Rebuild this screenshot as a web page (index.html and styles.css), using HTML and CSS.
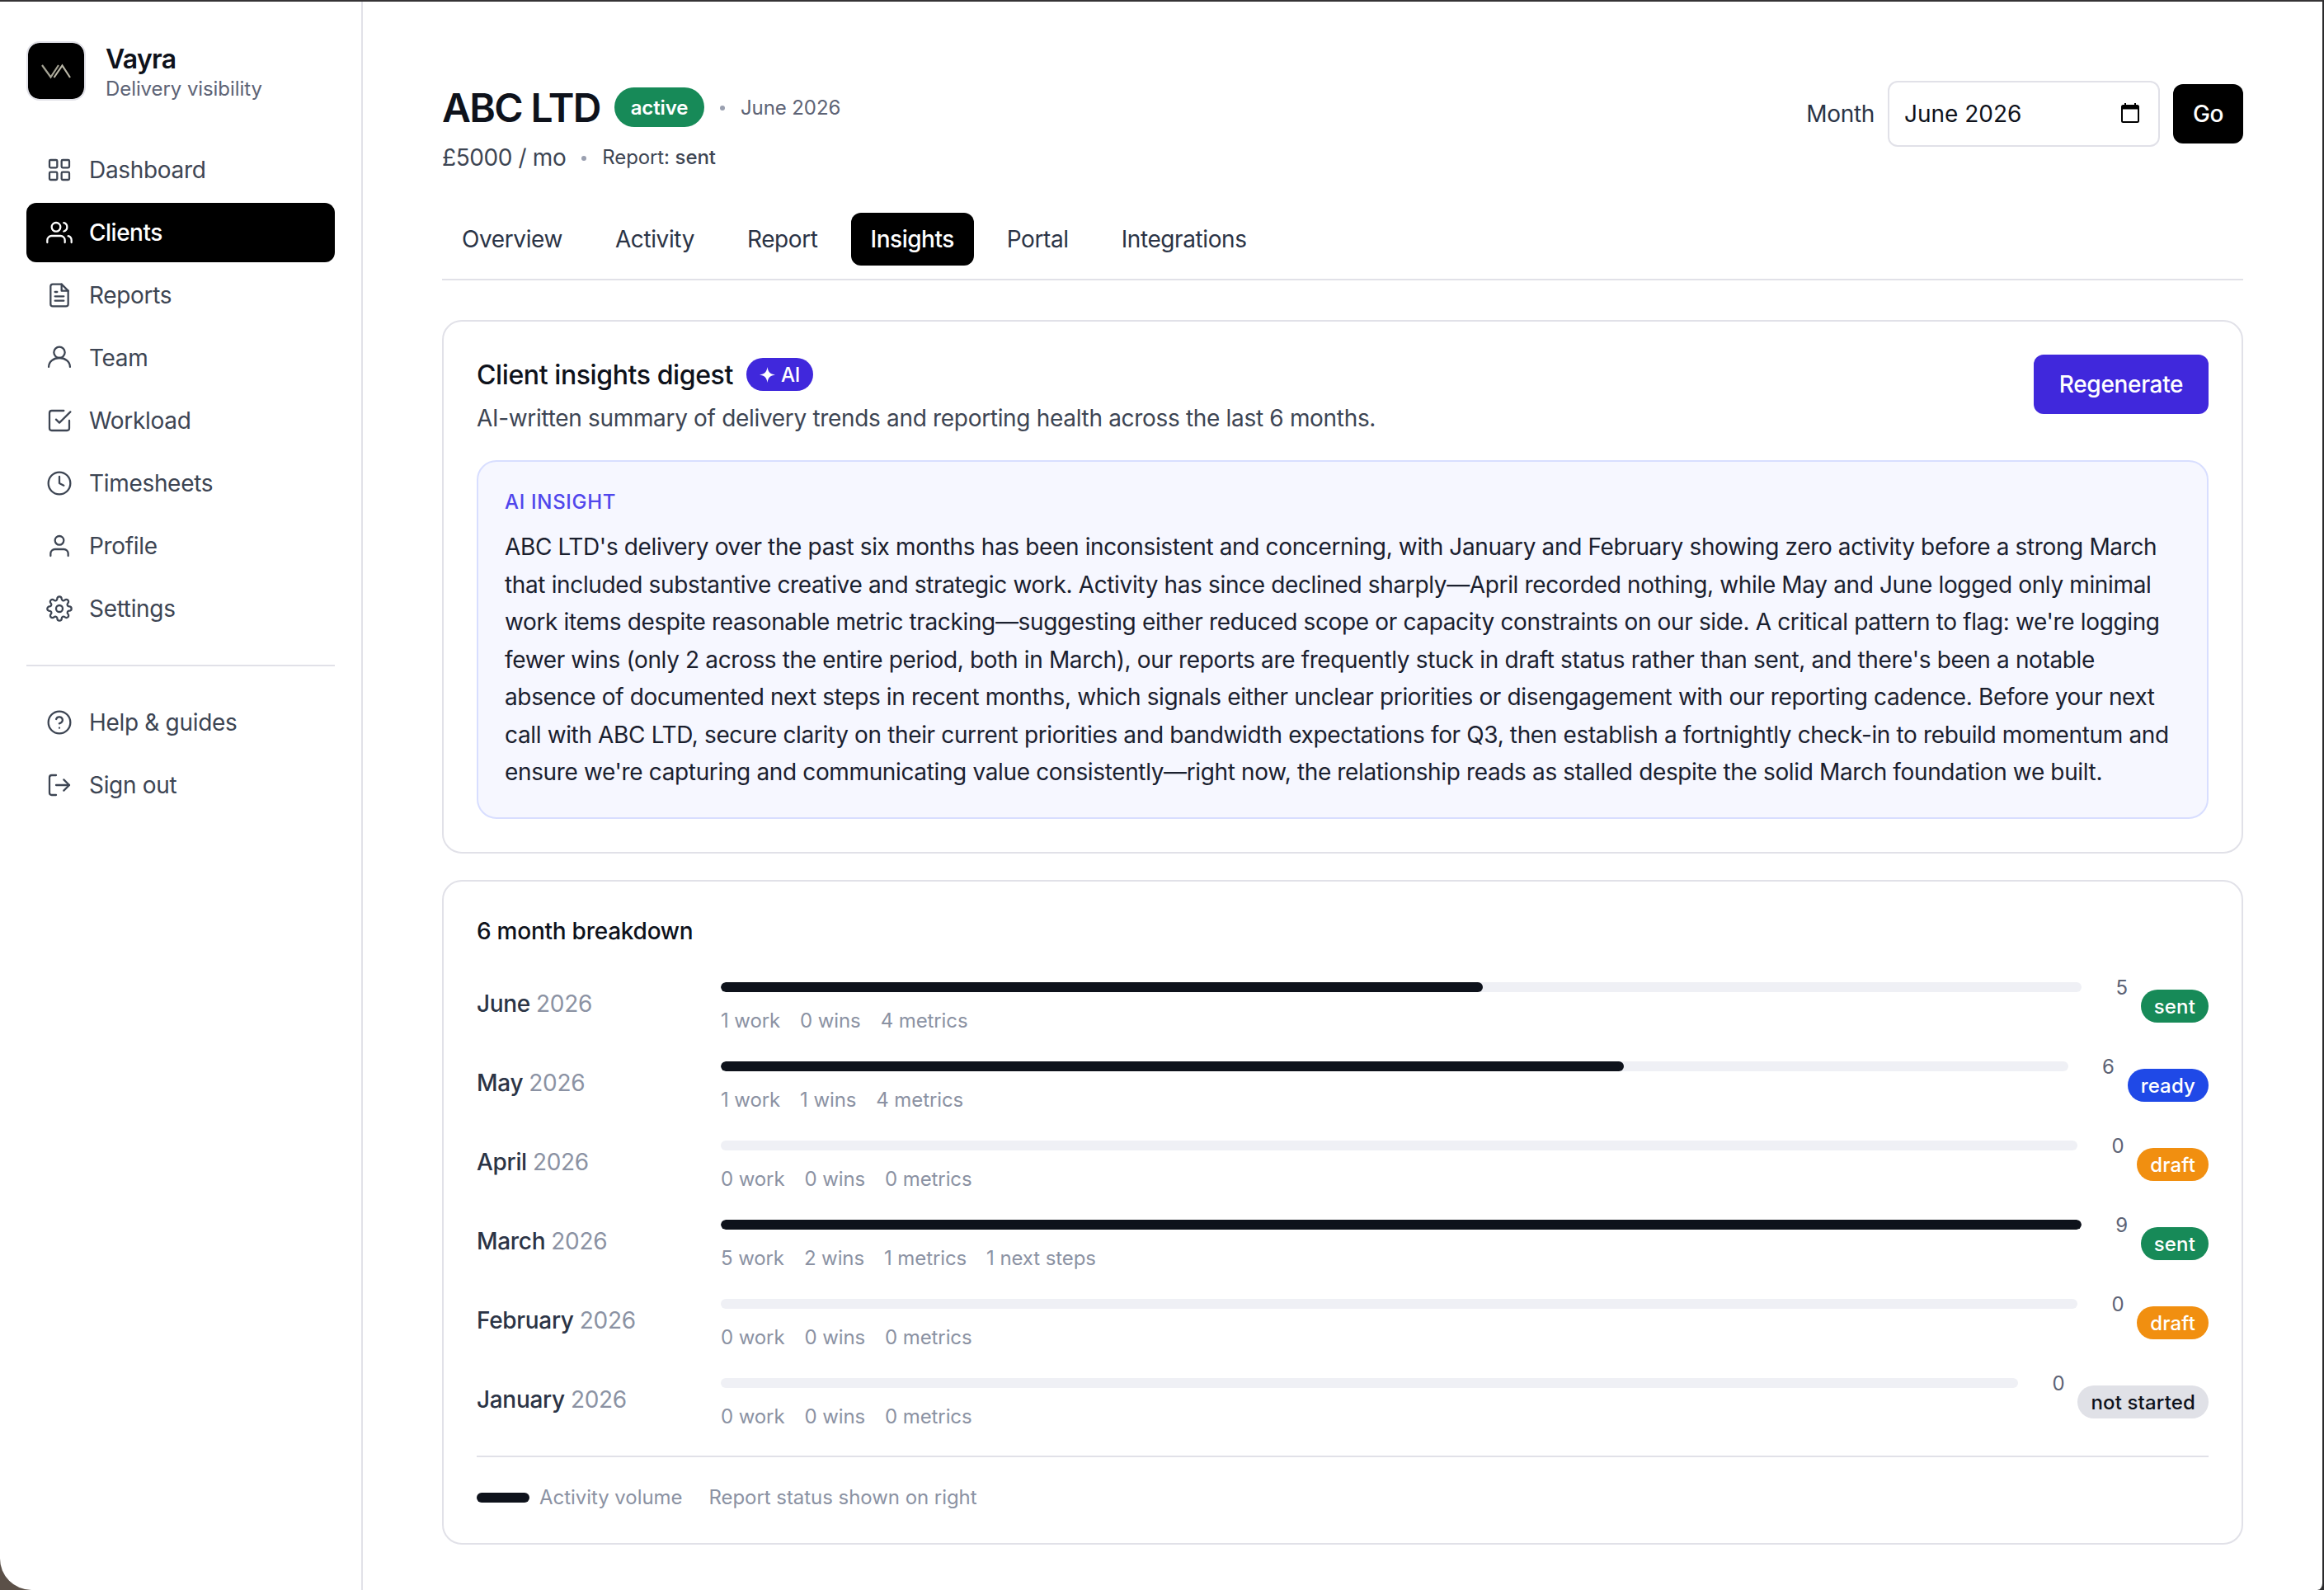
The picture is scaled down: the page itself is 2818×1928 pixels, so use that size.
FILE: index.html
```
<!DOCTYPE html>
<html lang="en">
<head>
    <meta charset="UTF-8">
    <meta name="viewport" content="width=device-width, initial-scale=1.0">
    <title>Vayra - Client insights</title>
    <link rel="stylesheet" href="styles.css">
</head>
<body>
    <div class="window">
        <aside class="sidebar">
            <div class="brand">
                <div class="brand-logo">
                    <svg viewBox="0 0 68 68" fill="none" stroke-width="2.2">
                        <path d="M17 27l10.500 14.500L37 27" stroke="#a5a394"/>
                        <path d="M31.500 42L41.500 27.500L51 42" stroke="#bab7a7"/>
                    </svg>
                </div>
                <div class="brand-text">
                    <div class="brand-name">Vayra</div>
                    <div class="brand-sub">Delivery visibility</div>
                </div>
            </div>

            <nav class="nav">
                <a class="nav-item">
                    <svg class="icon" viewBox="0 0 24 24"><rect x="3" y="3" width="7" height="7" rx="1"/><rect x="14" y="3" width="7" height="7" rx="1"/><rect x="14" y="14" width="7" height="7" rx="1"/><rect x="3" y="14" width="7" height="7" rx="1"/></svg>
                    <span>Dashboard</span>
                </a>
                <a class="nav-item active">
                    <svg class="icon" viewBox="0 0 24 24"><path d="M17 21v-2a4 4 0 0 0-4-4H5a4 4 0 0 0-4 4v2"/><circle cx="9" cy="7" r="4"/><path d="M23 21v-2a4 4 0 0 0-3-3.870"/><path d="M16 3.130a4 4 0 0 1 0 7.750"/></svg>
                    <span>Clients</span>
                </a>
                <a class="nav-item">
                    <svg class="icon" viewBox="0 0 24 24"><path d="M14 2H6a2 2 0 0 0-2 2v16a2 2 0 0 0 2 2h12a2 2 0 0 0 2-2V8z"/><path d="M14 2v6h6"/><path d="M16 13H8"/><path d="M16 17H8"/><path d="M10 9H8"/></svg>
                    <span>Reports</span>
                </a>
                <a class="nav-item">
                    <svg class="icon" viewBox="0 0 24 24"><circle cx="12" cy="7" r="5"/><path d="M2.300 20.200c0-4.700 4.300-8.200 9.700-8.200s9.700 3.500 9.700 8.200"/></svg>
                    <span>Team</span>
                </a>
                <a class="nav-item">
                    <svg class="icon" viewBox="0 0 24 24"><path d="M9 11l3 3L22 4"/><path d="M21 12v7a2 2 0 0 1-2 2H5a2 2 0 0 1-2-2V5a2 2 0 0 1 2-2h11"/></svg>
                    <span>Workload</span>
                </a>
                <a class="nav-item">
                    <svg class="icon" viewBox="0 0 24 24"><circle cx="12" cy="12" r="10"/><path d="M12 6v6l4 2"/></svg>
                    <span>Timesheets</span>
                </a>
                <a class="nav-item">
                    <svg class="icon" viewBox="0 0 24 24"><path d="M20 21v-2a4 4 0 0 0-4-4H8a4 4 0 0 0-4 4v2"/><circle cx="12" cy="7" r="4"/></svg>
                    <span>Profile</span>
                </a>
                <a class="nav-item">
                    <svg class="icon" viewBox="0 0 24 24"><circle cx="12" cy="12" r="3"/><path d="M19.400 15a1.650 1.650 0 0 0 .33 1.820l.06.06a2 2 0 0 1 0 2.830 2 2 0 0 1-2.830 0l-.06-.06a1.650 1.650 0 0 0-1.820-.33 1.650 1.650 0 0 0-1 1.510V21a2 2 0 0 1-2 2 2 2 0 0 1-2-2v-.09A1.650 1.650 0 0 0 9 19.400a1.650 1.650 0 0 0-1.820.33l-.06.06a2 2 0 0 1-2.830 0 2 2 0 0 1 0-2.830l.06-.06a1.650 1.650 0 0 0 .33-1.820 1.650 1.650 0 0 0-1.510-1H3a2 2 0 0 1-2-2 2 2 0 0 1 2-2h.09A1.650 1.650 0 0 0 4.600 9a1.650 1.650 0 0 0-.33-1.820l-.06-.06a2 2 0 0 1 0-2.830 2 2 0 0 1 2.830 0l.06.06a1.650 1.650 0 0 0 1.820.33H9a1.650 1.650 0 0 0 1-1.510V3a2 2 0 0 1 2-2 2 2 0 0 1 2 2v.09a1.650 1.650 0 0 0 1 1.510 1.650 1.650 0 0 0 1.820-.33l.06-.06a2 2 0 0 1 2.830 0 2 2 0 0 1 0 2.830l-.06.06a1.650 1.650 0 0 0-.33 1.820V9a1.650 1.650 0 0 0 1.510 1H21a2 2 0 0 1 2 2 2 2 0 0 1-2 2h-.09a1.650 1.650 0 0 0-1.510 1z"/></svg>
                    <span>Settings</span>
                </a>
            </nav>

            <nav class="nav nav-bottom">
                <a class="nav-item">
                    <svg class="icon" viewBox="0 0 24 24"><circle cx="12" cy="12" r="10"/><path d="M9.090 9a3 3 0 0 1 5.830 1c0 2-3 3-3 3"/><path d="M12 17h.01"/></svg>
                    <span>Help &amp; guides</span>
                </a>
                <a class="nav-item">
                    <svg class="icon" viewBox="0 0 24 24"><path d="M9 21H5a2 2 0 0 1-2-2V5a2 2 0 0 1 2-2h4"/><path d="M16 17l5-5-5-5"/><path d="M21 12H9"/></svg>
                    <span>Sign out</span>
                </a>
            </nav>
        </aside>

        <main class="main">
            <header class="page-header">
                <div>
                    <div class="title-row">
                        <h1>ABC LTD</h1>
                        <span class="badge-active">active</span>
                        <span class="dot"></span>
                        <span class="title-month">June 2026</span>
                    </div>
                    <div class="meta-row">
                        <span class="price">£5000 / mo</span>
                        <span class="dot"></span>
                        <span class="report">Report: <b>sent</b></span>
                    </div>
                </div>
                <form class="month-form">
                    <label>Month</label>
                    <div class="month-input">
                        <span>June 2026</span>
                        <svg viewBox="0 0 24 26"><path fill-rule="evenodd" d="M5 0h2v2h10V0h2v2h1.500A2.500 2.500 0 0 1 23 4.500v17a2.500 2.500 0 0 1-2.500 2.500h-17A2.500 2.500 0 0 1 1 21.500v-17A2.500 2.500 0 0 1 3.500 2H5zM3 7.500V22h18V7.500z"/></svg>
                    </div>
                    <button type="button" class="btn-go">Go</button>
                </form>
            </header>

            <div class="tabs">
                <a class="tab">Overview</a>
                <a class="tab">Activity</a>
                <a class="tab">Report</a>
                <a class="tab active">Insights</a>
                <a class="tab">Portal</a>
                <a class="tab">Integrations</a>
            </div>

            <section class="card digest">
                <div class="digest-head">
                    <div>
                        <div class="digest-title">
                            <h2>Client insights digest</h2>
                            <span class="badge-ai"><svg viewBox="0 0 20 20"><path d="M10 0C11 6.500 13.500 9 20 10C13.500 11 11 13.500 10 20C9 13.500 6.500 11 0 10C6.500 9 9 6.500 10 0z"/></svg>AI</span>
                        </div>
                        <p class="digest-sub">AI-written summary of delivery trends and reporting health across the last 6 months.</p>
                    </div>
                    <button type="button" class="btn-regenerate">Regenerate</button>
                </div>
                <div class="insight">
                    <div class="insight-label">AI INSIGHT</div>
                    <p>ABC LTD's delivery over the past six months has been inconsistent and concerning, with January and February showing zero activity before a strong March<br>
                    that included substantive creative and strategic work. Activity has since declined sharply—April recorded nothing, while May and June logged only minimal<br>
                    work items despite reasonable metric tracking—suggesting either reduced scope or capacity constraints on our side. A critical pattern to flag: we're logging<br>
                    fewer wins (only 2 across the entire period, both in March), our reports are frequently stuck in draft status rather than sent, and there's been a notable<br>
                    absence of documented next steps in recent months, which signals either unclear priorities or disengagement with our reporting cadence. Before your next<br>
                    call with ABC LTD, secure clarity on their current priorities and bandwidth expectations for Q3, then establish a fortnightly check-in to rebuild momentum and<br>
                    ensure we're capturing and communicating value consistently—right now, the relationship reads as stalled despite the solid March foundation we built.</p>
                </div>
            </section>

            <section class="card breakdown">
                <h3>6 month breakdown</h3>
                <div class="row">
                    <div class="row-month">June <span>2026</span></div>
                    <div class="row-body">
                        <div class="row-bar"><div class="track"><div class="fill" style="width: 56%"></div></div><span class="count">5</span></div>
                        <div class="row-stats"><span>1 work</span><span>0 wins</span><span>4 metrics</span></div>
                    </div>
                    <span class="status sent">sent</span>
                </div>
                <div class="row">
                    <div class="row-month">May <span>2026</span></div>
                    <div class="row-body">
                        <div class="row-bar"><div class="track"><div class="fill" style="width: 67%"></div></div><span class="count">6</span></div>
                        <div class="row-stats"><span>1 work</span><span>1 wins</span><span>4 metrics</span></div>
                    </div>
                    <span class="status ready">ready</span>
                </div>
                <div class="row">
                    <div class="row-month">April <span>2026</span></div>
                    <div class="row-body">
                        <div class="row-bar"><div class="track"></div><span class="count">0</span></div>
                        <div class="row-stats"><span>0 work</span><span>0 wins</span><span>0 metrics</span></div>
                    </div>
                    <span class="status draft">draft</span>
                </div>
                <div class="row">
                    <div class="row-month">March <span>2026</span></div>
                    <div class="row-body">
                        <div class="row-bar"><div class="track"><div class="fill" style="width: 100%"></div></div><span class="count">9</span></div>
                        <div class="row-stats"><span>5 work</span><span>2 wins</span><span>1 metrics</span><span>1 next steps</span></div>
                    </div>
                    <span class="status sent">sent</span>
                </div>
                <div class="row">
                    <div class="row-month">February <span>2026</span></div>
                    <div class="row-body">
                        <div class="row-bar"><div class="track"></div><span class="count">0</span></div>
                        <div class="row-stats"><span>0 work</span><span>0 wins</span><span>0 metrics</span></div>
                    </div>
                    <span class="status draft">draft</span>
                </div>
                <div class="row">
                    <div class="row-month">January <span>2026</span></div>
                    <div class="row-body">
                        <div class="row-bar"><div class="track"></div><span class="count">0</span></div>
                        <div class="row-stats"><span>0 work</span><span>0 wins</span><span>0 metrics</span></div>
                    </div>
                    <span class="status not-started">not started</span>
                </div>
                <div class="legend">
                    <span class="legend-bar"></span>
                    <span>Activity volume</span>
                    <span class="legend-note">Report status shown on right</span>
                </div>
            </section>
        </main>
    </div>
</body>
</html>
```
FILE: styles.css
```
* {
    box-sizing: border-box;
}

body {
    margin: 0;
    background: linear-gradient(90deg, #5b5048 0, #5b5048 60px, #2a2a2c 60px);
    font-family: Inter, "Liberation Sans", sans-serif;
    font-size: 28px;
    line-height: 40px;
    letter-spacing: -0.32px;
    color: #3d4553;
}

h1, h2, h3, p {
    margin: 0;
}

button {
    border: none;
    font: inherit;
    letter-spacing: inherit;
    color: #fff;
    border-radius: 12px;
    padding: 0;
    height: 72px;
}

.window {
    display: flex;
    width: 2818px;
    height: 1928px;
    background: #fff;
    border-top: 2px solid #363436;
    border-right: 2px solid #2a2a2c;
    border-radius: 0 0 8px 38px;
    overflow: hidden;
    white-space: nowrap;
}

/* sidebar */
.sidebar {
    width: 440px;
    flex-shrink: 0;
    padding: 48px 32px 0;
    border-right: 2px solid #e1e1e8;
}

.brand {
    display: flex;
    align-items: center;
    gap: 24px;
    height: 72px;
    margin-bottom: 48px;
}

.brand-logo {
    width: 72px;
    height: 72px;
    border: 2px solid #e1e1e8;
    border-radius: 16px;
    background: #000;
    background-clip: padding-box;
}

.brand-logo svg {
    display: block;
}

.brand-text {
    padding-top: 3px;
}

.brand-name {
    font-size: 32px;
    line-height: 40px;
    font-weight: 600;
    color: #0e121b;
    letter-spacing: -0.7px;
}

.brand-sub {
    font-size: 24px;
    line-height: 32px;
    color: #5d6375;
    letter-spacing: -0.08px;
}

.nav {
    display: flex;
    flex-direction: column;
    gap: 4px;
}

.nav-item {
    display: flex;
    align-items: center;
    gap: 20px;
    height: 72px;
    padding: 0 24px;
    border-radius: 12px;
}

.nav-item.active {
    background: #000;
    color: #fff;
    font-weight: 500;
    letter-spacing: -0.5px;
}

.icon {
    width: 32px;
    height: 32px;
    fill: none;
    stroke: currentColor;
    stroke-width: 1.7;
    stroke-linecap: round;
    stroke-linejoin: round;
}

.nav-bottom {
    margin-top: 32px;
    padding-top: 32px;
    border-top: 2px solid #e1e1e8;
}

/* page header */
.main {
    flex: 1;
    padding: 96px 96px 0;
}

.page-header {
    display: flex;
    justify-content: space-between;
    height: 160px;
}

.title-row, .meta-row {
    display: flex;
    align-items: center;
    font-size: 24px;
    letter-spacing: -0.1px;
}

.title-row {
    height: 64px;
}

.meta-row {
    height: 58px;
}

h1 {
    font-size: 48px;
    line-height: 64px;
    font-weight: 600;
    color: #0e121b;
    letter-spacing: -1.6px;
    width: 209px;
    padding-top: 2px;
}

.badge-active {
    width: 109px;
    height: 48px;
    line-height: 49px;
    border-radius: 24px;
    text-align: center;
    background: #178a58;
    color: #fff;
    font-weight: 600;
}

.dot {
    width: 6px;
    height: 6px;
    border-radius: 50%;
    background: #9aa0b0;
    margin: 2px 19px 0;
}

.title-month {
    color: #5d6375;
    padding-top: 2px;
}

.price {
    font-size: 28px;
    letter-spacing: -0.4px;
}

.report b {
    font-weight: 500;
}

.month-form {
    display: flex;
    align-items: center;
    height: 80px;
    gap: 16px;
    color: #2b3446;
}

.month-input {
    display: flex;
    align-items: center;
    justify-content: space-between;
    width: 330px;
    height: 80px;
    padding: 0 22px 0 18px;
    border: 2px solid #e1e1e8;
    border-radius: 12px;
    color: #0e121b;
    letter-spacing: 0;
}

.month-input svg {
    width: 24px;
    height: 26px;
}

.btn-go {
    width: 85px;
    background: #000;
    font-weight: 500;
}

.tabs {
    display: flex;
    gap: 16px;
    height: 82px;
    border-bottom: 2px solid #e1e1e8;
    margin-bottom: 48px;
}

.tab {
    height: 64px;
    line-height: 64px;
    padding: 0 24px;
    border-radius: 12px;
    color: #2b3446;
    letter-spacing: -0.4px;
}

.tab.active {
    background: #000;
    color: #fff;
    font-weight: 500;
    letter-spacing: -0.5px;
}

/* cards */
.card {
    border: 2px solid #e1e1e8;
    border-radius: 24px;
    padding: 40px;
}

.digest {
    height: 647px;
    margin-bottom: 32px;
}

.digest-head {
    display: flex;
    justify-content: space-between;
    height: 128px;
}

.digest-title {
    display: flex;
    align-items: center;
    gap: 16px;
    height: 48px;
    margin-bottom: 8px;
}

h2 {
    font-size: 32px;
    font-weight: 500;
    color: #0e121b;
    letter-spacing: -0.4px;
    padding-top: 1px;
}

.digest-sub {
    padding-top: 1px;
}

.badge-ai {
    display: flex;
    align-items: center;
    justify-content: center;
    gap: 7px;
    width: 81px;
    height: 40px;
    border-radius: 20px;
    background: #4028dc;
    color: #fff;
    font-size: 24px;
    line-height: 41px;
    font-weight: 500;
}

.badge-ai svg {
    width: 19px;
    height: 19px;
    fill: #fff;
}

.btn-regenerate {
    width: 212px;
    background: #4028dc;
    font-weight: 500;
}

.insight {
    height: 435px;
    padding: 33px 32px 0;
    border: 2px solid #d8deff;
    border-radius: 24px;
    background: #f6f7ff;
}

.insight-label {
    font-size: 24px;
    line-height: 32px;
    font-weight: 500;
    color: #5046ec;
    letter-spacing: 0.7px;
    margin-bottom: 16px;
}

.insight p {
    line-height: 45.5px;
    letter-spacing: -0.36px;
    color: #1a202e;
}

/* monthly breakdown */
.breakdown {
    height: 806px;
}

h3 {
    font-size: 28px;
    line-height: 40px;
    font-weight: 500;
    color: #0e121b;
    letter-spacing: -0.25px;
    margin-bottom: 20px;
}

.row {
    display: flex;
    align-items: center;
    height: 96px;
}

.row-month {
    width: 296px;
    font-weight: 500;
    color: #2b3446;
}

.row-month span {
    font-weight: 400;
    color: #8b92a3;
}

.row-body {
    flex: 1;
}

.row-bar {
    display: flex;
    align-items: center;
    gap: 16px;
    height: 32px;
}

.track {
    flex: 1;
    height: 12px;
    border-radius: 6px;
    background: #eff0f5;
    overflow: hidden;
}

.fill {
    height: 12px;
    border-radius: 6px;
    background: #0e121b;
}

.count {
    width: 40px;
    text-align: right;
    padding-top: 1px;
    font-size: 24px;
    line-height: 32px;
    color: #5d6375;
}

.row-stats {
    display: flex;
    gap: 24px;
    height: 32px;
    padding-top: 1px;
    margin-top: 8px;
    font-size: 24px;
    line-height: 32px;
    letter-spacing: -0.1px;
    color: #8b92a3;
}

.status {
    height: 40px;
    line-height: 41px;
    margin: 5px 0 0 16px;
    padding: 0 16px;
    border-radius: 20px;
    font-size: 24px;
    font-weight: 500;
    letter-spacing: 0.15px;
    color: #fff;
}

.sent {
    background: #178a58;
}

.ready {
    background: #1f49e7;
}

.draft {
    background: #f18f10;
}

.not-started {
    background: #e0e1e7;
    color: #0e121b;
}

.legend {
    display: flex;
    align-items: center;
    border-top: 2px solid #e1e1e8;
    margin-top: 20px;
    padding-top: 32px;
    font-size: 24px;
    line-height: 33px;
    letter-spacing: -0.05px;
    color: #8b92a3;
}

.legend-bar {
    width: 64px;
    height: 12px;
    border-radius: 6px;
    background: #0e121b;
    margin-right: 12px;
}

.legend-note {
    margin-left: 32px;
}
```
